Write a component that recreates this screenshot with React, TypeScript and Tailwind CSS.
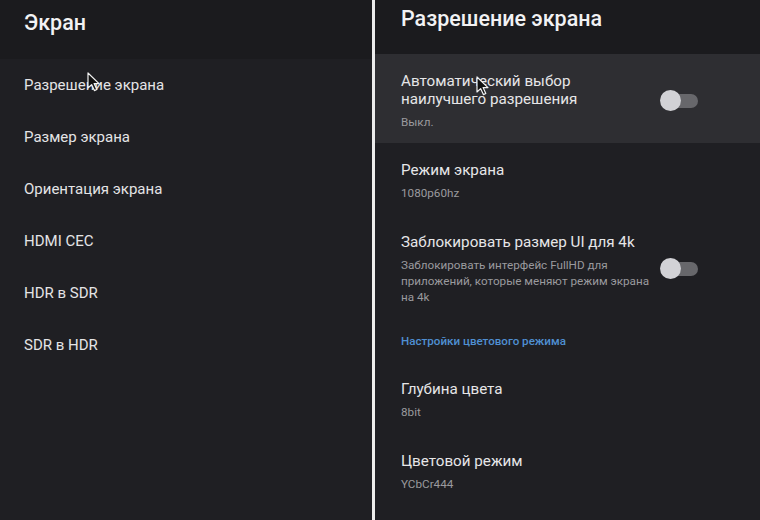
import React from "react";

const LEFT_ITEMS = ["Разрешение экрана", "Размер экрана", "Ориентация экрана", "HDMI CEC", "HDR в SDR", "SDR в HDR"];

function Cursor({ className }: { className: string }) {
    return (
        <svg className={`absolute ${className}`} width="14" height="20" viewBox="0 0 14 20">
            <path d="M1 1 L1 16 L4.6 12.6 L7.4 18.6 L9.8 17.5 L7.1 11.6 L12 11.6 Z" fill="#111" stroke="#f2f2f2" strokeWidth="1.2" strokeLinejoin="round" />
        </svg>
    );
}

function Toggle() {
    return (
        <div className="relative w-[38px] h-[22px] shrink-0">
            <div className="absolute left-[4px] right-0 top-[4px] h-[14px] rounded-full bg-[#67676b]" />
            <div className="absolute left-0 top-0 w-[21px] h-[21px] rounded-full bg-[#d2d2d6]" />
        </div>
    );
}

function Row({
    title,
    sub,
    highlight,
    toggle,
}: {
    title: React.ReactNode;
    sub: React.ReactNode;
    highlight?: boolean;
    toggle?: boolean;
}) {
    return (
        <div className={`flex items-center pl-[26px] pr-[62px] pt-[18px] ${highlight ? "bg-[#2e2e32] pb-[13px]" : "pb-[14px]"}`}>
            <div className="flex-1">
                <div className="text-[15.2px] leading-[18px] text-[#e6e6e8]">{title}</div>
                <div className="mt-[6px] text-[11.7px] leading-[16px] text-[#9a9a9e]">{sub}</div>
            </div>
            {toggle && <Toggle />}
        </div>
    );
}

export default function App() {
    return (
        <div
            className="relative w-[760px] h-[520px] flex bg-[#1f1f23] overflow-hidden"
            style={{ fontFamily: "Roboto, 'Noto Sans', sans-serif" }}
        >
            {/* Left: screen menu */}
            <div className="w-[372px] flex flex-col">
                <div className="h-[59px] bg-[#1b1b1e] pl-6 pt-[10px]">
                    <h1 className="text-[21.5px] leading-[26px] font-medium text-[#f2f2f4]">Экран</h1>
                </div>
                <ul>
                    {LEFT_ITEMS.map((item) => (
                        <li key={item} className="h-[52px] flex items-center pl-6 text-[15px] text-[#e4e4e6]">
                            {item}
                        </li>
                    ))}
                </ul>
            </div>

            <div className="w-[3px] bg-[#ececec]" />

            {/* Right: resolution settings */}
            <div className="flex-1 flex flex-col">
                <div className="h-[54px] bg-[#1b1b1e] pl-[26px] pt-[6px]">
                    <h2 className="text-[21.5px] leading-[26px] font-medium text-[#f2f2f4]">Разрешение экрана</h2>
                </div>
                <Row
                    highlight
                    toggle
                    title={
                        <>
                            Автоматический выбор
                            <br />
                            наилучшего разрешения
                        </>
                    }
                    sub="Выкл."
                />
                <Row title="Режим экрана" sub="1080p60hz" />
                <Row
                    toggle
                    title="Заблокировать размер UI для 4k"
                    sub={
                        <>
                            <span className="block whitespace-nowrap">Заблокировать интерфейс FullHD для</span>
                            <span className="block whitespace-nowrap">приложений, которые меняют режим экрана</span>
                            <span className="block whitespace-nowrap">на 4k</span>
                        </>
                    }
                />
                <div className="pl-[26px] pt-[15px] pb-[14px] text-[11.6px] leading-[14px] font-medium text-[#4f8fd2]">
                    Настройки цветового режима
                </div>
                <Row title="Глубина цвета" sub="8bit" />
                <Row title="Цветовой режим" sub="YCbCr444" />
            </div>

            <Cursor className="left-[87px] top-[72px]" />
            <Cursor className="left-[476px] top-[76px]" />
        </div>
    );
}
